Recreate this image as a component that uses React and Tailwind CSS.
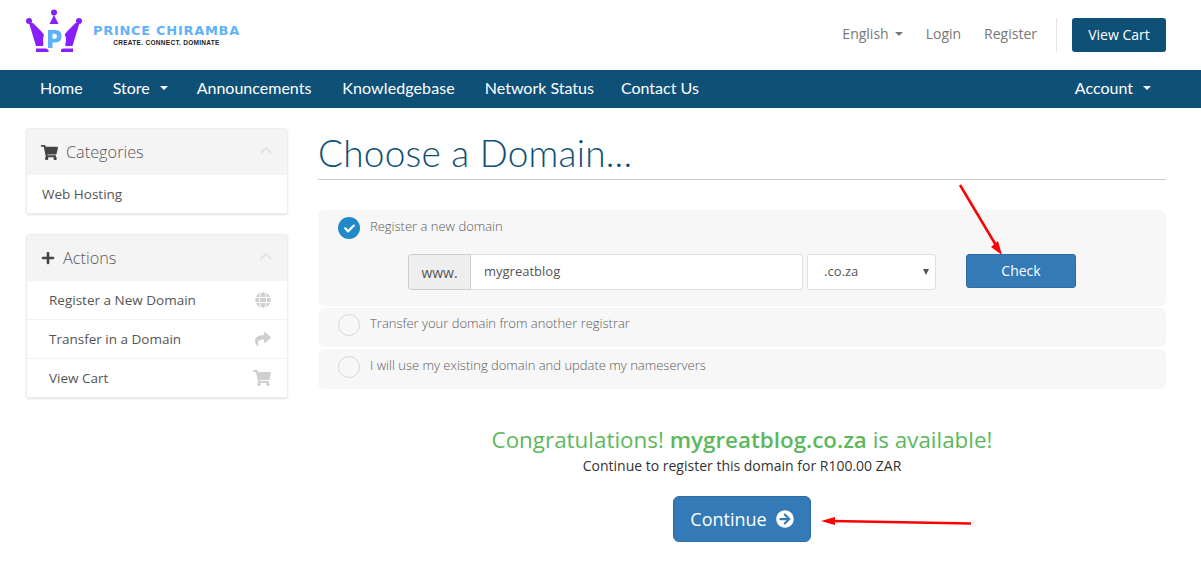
import React from "react";
import { FaShoppingCart, FaPlus, FaGlobe, FaShare, FaChevronUp, FaArrowCircleRight, FaCheck } from "react-icons/fa";

const os = "font-['Open_Sans',sans-serif]";
const ral = "font-['Lato',sans-serif]";

function Caret({ className = "" }) {
  return <span className={`inline-block w-0 h-0 border-x-[4px] border-x-transparent border-t-[4px] ${className}`} />;
}

function Logo() {
  return (
    <div className="flex items-center mb-[8px]">
      <svg width="57" height="44" viewBox="26 9 57 44" className="shrink-0">
        <circle cx="54" cy="12.500" r="3" fill="#8a1dfb" />
        <path d="M54 15 L58.500 24 H49.500 Z" fill="#8a1dfb" />
        <circle cx="29" cy="21" r="3" fill="#8a1dfb" />
        <circle cx="79" cy="21" r="3" fill="#8a1dfb" />
        <path d="M29 23 L33 23 L41 31 L45 36 L43 46 H36 Z" fill="#8a1dfb" />
        <path d="M79.500 23 L75.500 23 L67.500 31 L63.500 36 L65.500 46 H72.500 Z" fill="#8a1dfb" />
        <rect x="36" y="48.500" width="12.500" height="3.500" fill="#8a1dfb" />
        <rect x="61" y="48.500" width="12" height="3.500" fill="#8a1dfb" />
        <circle cx="54.500" cy="40" r="11.500" fill="#ffffff" />
        <path d="M48 30 H55.500 Q61.500 30 61.500 36 Q61.500 42.500 55.500 42.500 H52.500 V48 H48 Z M52.500 33.800 V38.800 H54.800 Q57 38.800 57 36.300 Q57 33.800 54.800 33.800 Z" fill="#5eb0fb" fillRule="evenodd" />
      </svg>
      <div className="ml-[10px] mt-[9px] flex flex-col items-center">
        <span className="font-['DejaVu_Sans',sans-serif] font-bold text-[13px] leading-[15px] tracking-[0.7px] text-[#62b2fb] whitespace-nowrap">PRINCE CHIRAMBA</span>
        <span className="font-['Liberation_Sans',sans-serif] font-bold text-[6.500px] leading-[10px] tracking-[0.3px] text-[#222] whitespace-nowrap">CREATE. CONNECT. DOMINATE</span>
      </div>
    </div>
  );
}

function Panel({ icon, title, gap, children }) {
  return (
    <div className="rounded-[3px] border border-[#eeeeee] shadow-[0_1px_2px_rgba(0,0,0,0.12)] bg-white overflow-hidden">
      <div className="h-[46px] bg-[#f4f4f4] flex items-center pl-[14px] pr-[14px] text-[#555]">
        {icon}
        <span className={`${os} font-light text-[16.300px] text-[#58595b]`} style={{ marginLeft: gap }}>{title}</span>
        <FaChevronUp className="ml-auto text-[#e4e4e4] text-[14px] -mt-[5px]" />
      </div>
      {children}
    </div>
  );
}

function ActionRow({ label, icon, last }) {
  return (
    <div className={`${last ? "h-[38px]" : "h-[39px] border-b border-[#f1f1f1]"} flex items-center pl-[22px] pr-[16px]`}>
      <span className={`${os} text-[13.500px] text-[#555]`}>{label}</span>
      <span className="ml-auto text-[#cfcfcf] text-[16px] flex">{icon}</span>
    </div>
  );
}

function Radio({ checked }) {
  return checked ? (
    <span className="w-[22px] h-[22px] rounded-full bg-[#2188c9] flex items-center justify-center shrink-0">
      <FaCheck className="text-white text-[11px]" />
    </span>
  ) : (
    <span className="w-[22px] h-[22px] rounded-full border border-[#d8d8d0] shrink-0" />
  );
}

export default function App() {
  return (
    <div className={`relative w-[1201px] h-[566px] bg-white overflow-hidden ${os}`}>
      <header className="h-[70px] flex items-center justify-between pl-[26px] pr-[35px]">
        <Logo />
        <div className="flex items-center -mt-[1px]">
          <div className="flex items-center mb-[2px]">
            <span className="text-[14px] text-[#777] flex items-center">English<Caret className="ml-[6px] border-t-[#777]" /></span>
            <span className="text-[14px] text-[#777] ml-[23px]">Login</span>
            <span className="text-[14px] text-[#777] ml-[23px]">Register</span>
          </div>
          <span className="w-px h-[34px] bg-[#e2e2e2] ml-[19px]" />
          <button className="ml-[15px] w-[94px] h-[34px] rounded-[3px] bg-[#0f5077] text-white text-[14px]">View Cart</button>
        </div>
      </header>

      <nav className={`h-[38px] bg-[#0f5077] flex items-center pl-[40px] pr-[50px] pb-[2px] text-white text-[16px] ${ral}`}>
        <span>Home</span>
        <span className="ml-[30px] flex items-center">Store<Caret className="ml-[10px] border-t-white" /></span>
        <span className="ml-[29px]">Announcements</span>
        <span className="ml-[31px] tracking-[0.1px]">Knowledgebase</span>
        <span className="ml-[30px]">Network Status</span>
        <span className="ml-[27px]">Contact Us</span>
        <span className="ml-auto flex items-center">Account<Caret className="ml-[10px] border-t-white" /></span>
      </nav>

      <main className="flex pl-[26px] pt-[20px] gap-[30px]">
        <aside className="w-[262px] flex flex-col gap-[20px] shrink-0">
          <Panel icon={<FaShoppingCart className="text-[17px] text-[#444]" />} title="Categories" gap="8px">
            <div className="h-[38px] flex items-center pl-[15px]">
              <span className="text-[13.500px] text-[#555]">Web Hosting</span>
            </div>
          </Panel>
          <Panel icon={<FaPlus className="text-[14px] text-[#444]" />} title="Actions" gap="8px">
            <ActionRow label="Register a New Domain" icon={<FaGlobe />} />
            <ActionRow label="Transfer in a Domain" icon={<FaShare />} />
            <ActionRow label="View Cart" icon={<FaShoppingCart className="text-[18px]" />} last />
          </Panel>
        </aside>

        <section className="w-[848px] shrink-0">
          <h1 className={`${ral} font-light text-[37px] leading-[52px] text-[#0f5077] h-[52px] tracking-[0.22px] border-b border-[#c9c9c9] box-content pb-0 -mt-[1px]`}>Choose a Domain...</h1>

          <div className="mt-[30px] flex flex-col gap-[2px]">
            <div className="h-[96px] rounded-[6px] bg-[#f7f7f7] pl-[20px] pt-[7px]">
              <div className="flex items-start">
                <Radio checked />
                <span className="ml-[10px] text-[13px] font-light leading-[18px] text-[#5a5a5a]">Register a new domain</span>
              </div>
              <div className="flex items-start mt-[15px] ml-[70px]">
                <div className="w-[63px] h-[36px] flex items-center justify-center bg-[#eeeeee] border border-[#cccccc] rounded-l-[3px] text-[14px] text-[#555]">www.</div>
                <div className="w-[332px] h-[36px] flex items-center pl-[13px] bg-white border border-l-0 border-[#e0e0e0] rounded-r-[3px] text-[13px] text-[#555]">mygreatblog</div>
                <div className="relative ml-[4px] w-[129px] h-[36px] flex items-center pl-[16px] bg-white border border-[#e0e0e0] rounded-[3px] text-[13px] text-[#555]">
                  .co.za
                  <span className="absolute right-[6px] top-[14px] w-0 h-0 border-x-[3px] border-x-transparent border-t-[6px] border-t-[#555]" />
                </div>
                <button className="ml-[30px] w-[110px] h-[34px] pb-[1px] rounded-[3px] bg-[#337ab7] border border-[#2e6da4] text-white text-[14px]">Check</button>
              </div>
            </div>
            <div className="h-[39px] rounded-[6px] bg-[#f7f7f7] pl-[20px] flex items-start pt-[6px]">
              <Radio />
              <span className="ml-[10px] text-[13px] font-light leading-[18px] text-[#5a5a5a]">Transfer your domain from another registrar</span>
            </div>
            <div className="h-[40px] rounded-[6px] bg-[#f7f7f7] pl-[20px] flex items-start pt-[7px]">
              <Radio />
              <span className="ml-[10px] text-[13px] font-light leading-[18px] text-[#5a5a5a]">I will use my existing domain and update my nameservers</span>
            </div>
          </div>

          <div className="mt-[35px] flex flex-col items-center">
            <p className="text-[22.400px] leading-[31px] text-[#5cb85c] whitespace-nowrap">Congratulations! <strong className="font-semibold">mygreatblog.co.za</strong> is available!</p>
            <p className="text-[14px] leading-[20px] mt-[1px] text-[#333] whitespace-nowrap">Continue to register this domain for R100.00 ZAR</p>
            <button className="mt-[20px] w-[138px] h-[46px] rounded-[6px] bg-[#337ab7] border border-[#2e6da4] text-white text-[18px] flex items-center justify-center gap-[9px]">
              Continue <FaArrowCircleRight className="text-[18px]" />
            </button>
          </div>
        </section>
      </main>

      <svg className="absolute inset-0 pointer-events-none" width="1201" height="566">
        <line x1="960" y1="185" x2="997" y2="247" stroke="#ff0000" strokeWidth="2.500" />
        <path d="M1002 255 L991 247 L998 241 Z" fill="#ff0000" />
        <line x1="971" y1="523.500" x2="832" y2="521" stroke="#ff0000" strokeWidth="2.500" />
        <path d="M821 521 L835 517 L835 525 Z" fill="#ff0000" />
      </svg>
    </div>
  );
}
